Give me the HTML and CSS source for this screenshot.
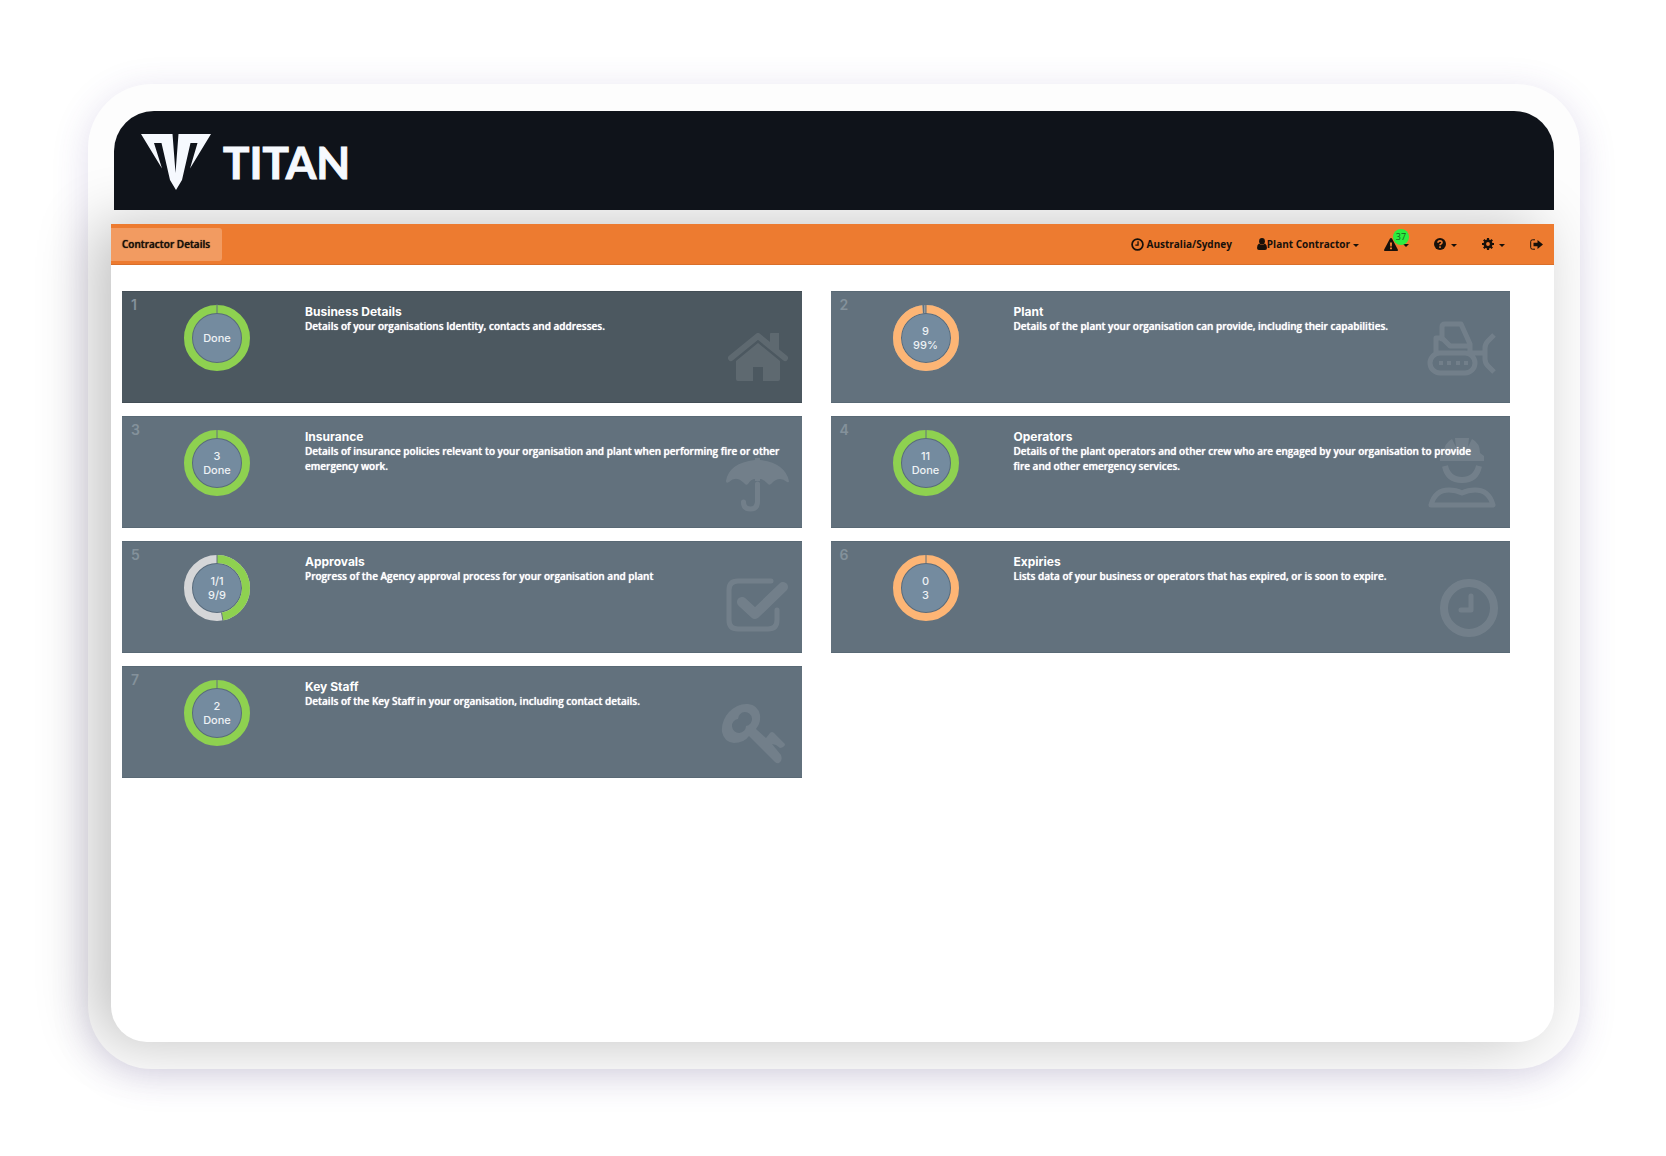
FILE: index.html
```
<!DOCTYPE html>
<html lang="en">

<head>
    <meta charset="UTF-8">
    <meta name="viewport" content="width=device-width, initial-scale=1.0">
    <title>Titan - Contractor Details</title>
    <link rel="stylesheet" href="styles.css">
</head>

<body>
    <div class="device">
        <header class="brand">
            <svg class="brand__mark" viewBox="0 0 70 56" width="70" height="56">
                <path fill="currentColor" fill-rule="evenodd" d="M0 0H31.500L34.500 39 37.500 0H70L49 34.500 56.500 9H49.500L41 46 35 56 29 46 20.500 9H13L21 34.500Z" />
            </svg>
            <span class="brand__name">TITAN</span>
        </header>

        <div class="screen">
            <nav class="navbar">
                <a href="#" class="navbar__tab">Contractor Details</a>
                <ul class="navbar__menu">
                    <li>
                        <button type="button" class="navbar__button">
                            <svg viewBox="0 0 12 12" width="13" height="13" fill="none" stroke="currentColor">
                                <circle cx="6" cy="6" r="5" stroke-width="1.600" />
                                <path d="M6.500 3V6.500H4" stroke-width="1.200" />
                            </svg>
                            <span class="navbar__label navbar__label--spaced">Australia/Sydney</span>
                        </button>
                    </li>
                    <li>
                        <button type="button" class="navbar__button">
                            <svg viewBox="0 0 10 12" width="10" height="12" fill="currentColor">
                                <ellipse cx="5" cy="3.200" rx="2.900" ry="3.200" />
                                <path d="M2 5.500Q5 8 8 5.500 10 6.500 10 10 10 12 8 12H2Q0 12 0 10 0 6.500 2 5.500Z" />
                            </svg>
                            <span class="navbar__label">Plant Contractor</span>
                            <span class="caret"></span>
                        </button>
                    </li>
                    <li>
                        <button type="button" class="navbar__button" aria-label="Alerts">
                            <svg viewBox="0 0 14 13" width="14" height="13" fill="currentColor">
                                <path fill-rule="evenodd" d="M7 0Q7.700 0 8 .6L13.800 11.500Q14.200 13 13 13H1Q-.2 13 .2 11.500L6 .6Q6.300 0 7 0ZM5.900 4.500 6.200 8.500H7.800L8.100 4.500ZM6 9.500V11.300H8V9.500Z" />
                            </svg>
                            <span class="caret caret--spaced"></span>
                            <span class="badge">37</span>
                        </button>
                    </li>
                    <li>
                        <button type="button" class="navbar__button" aria-label="Help">
                            <svg viewBox="0 0 12 12" width="12" height="12">
                                <circle cx="6" cy="6" r="6" fill="currentColor" />
                                <path class="navbar__cutout" d="M4 4.800Q4 2.900 6 2.900 8 2.900 8 4.600 8 5.600 6.900 6.100 6 6.500 6 7.300M6 8.300V10" />
                            </svg>
                            <span class="caret caret--spaced"></span>
                        </button>
                    </li>
                    <li>
                        <button type="button" class="navbar__button" aria-label="Settings">
                            <svg viewBox="0 0 12 12" width="12" height="12" fill="none" stroke="currentColor">
                                <circle cx="6" cy="6" r="3.200" stroke-width="2.600" />
                                <path stroke-width="2.200" d="M6 0V2.500M6 9.500V12M0 6H2.500M9.500 6H12M1.800 1.800 3.500 3.500M8.500 8.500 10.200 10.200M10.200 1.800 8.500 3.500M3.500 8.500 1.800 10.200" />
                            </svg>
                            <span class="caret caret--spaced"></span>
                        </button>
                    </li>
                    <li>
                        <button type="button" class="navbar__button" aria-label="Log out">
                            <svg viewBox="0 0 13 11" width="13" height="11">
                                <path fill="none" stroke="currentColor" d="M5 .8H2.500Q.7 .8 .7 2.600V8.400Q.7 10.200 2.500 10.200H5" />
                                <path fill="currentColor" d="M3.500 3.800H7.500V1L13 5.500 7.500 10V7.200H3.500Z" />
                            </svg>
                        </button>
                    </li>
                </ul>
            </nav>

            <main class="cards">
                <a href="#" class="card card--active">
                    <span class="card__number">1</span>
                    <div class="ring">
                        <svg class="ring__chart" viewBox="0 0 68 68">
                            <circle class="ring__disc" cx="34" cy="34" r="25" />
                            <circle class="ring__value ring__value--green" cx="34" cy="34" r="29" pathLength="100" stroke-dasharray="100" />
                            <path class="ring__tick" d="M34 0V9" />
                        </svg>
                        <div class="ring__text">Done</div>
                    </div>
                    <div class="card__body">
                        <h2>Business Details</h2>
                        <p>Details of your organisations Identity, contacts and addresses.</p>
                    </div>
                    <svg class="card__icon" viewBox="0 0 72 72">
                        <path class="line" stroke-width="6" d="M11 36 38 14 65 36" />
                        <path class="fill" d="M51 11H59V31L50 23V12Q50 11 51 11ZM38 21 60 39V57Q60 59 58 59H43V45H33V59H18Q16 59 16 57V39Z" />
                    </svg>
                </a>

                <a href="#" class="card">
                    <span class="card__number">2</span>
                    <div class="ring">
                        <svg class="ring__chart" viewBox="0 0 68 68">
                            <circle class="ring__disc" cx="34" cy="34" r="25" />
                            <circle class="ring__value ring__value--gap" cx="34" cy="34" r="29" />
                            <circle class="ring__value ring__value--orange" cx="34" cy="34" r="29" pathLength="100" stroke-dasharray="98 2" />
                            <path class="ring__tick" d="M34 0V9M31.500 0V9" />
                        </svg>
                        <div class="ring__text">9<br>99%</div>
                    </div>
                    <div class="card__body">
                        <h2>Plant</h2>
                        <p>Details of the plant your organisation can provide, including their capabilities.</p>
                    </div>
                    <svg class="card__icon" viewBox="0 0 72 72">
                        <path class="line" stroke-width="5" d="M14 17V5Q14 2 17 2H33L42 22V31M14 16H8V31M14 16 22 24H42M12 31H37A10 10 0 0 1 37 51H12A10 10 0 0 1 12 31ZM44 31H56" />
                        <path class="line line--flat" stroke-width="5" d="M66 13 60 19Q57 22 57 26V37Q57 41 60 44L66 50" />
                        <path class="line line--flat" stroke-width="4" d="M11 41H15M19 41H23M28 41H32M36 41H40" />
                    </svg>
                </a>

                <a href="#" class="card">
                    <span class="card__number">3</span>
                    <div class="ring">
                        <svg class="ring__chart" viewBox="0 0 68 68">
                            <circle class="ring__disc" cx="34" cy="34" r="25" />
                            <circle class="ring__value ring__value--green" cx="34" cy="34" r="29" pathLength="100" stroke-dasharray="100" />
                            <path class="ring__tick" d="M34 0V9" />
                        </svg>
                        <div class="ring__text">3<br>Done</div>
                    </div>
                    <div class="card__body">
                        <h2>Insurance</h2>
                        <p>Details of insurance policies relevant to your organisation and plant when performing fire or other emergency work.</p>
                    </div>
                    <svg class="card__icon" viewBox="0 0 72 72">
                        <path class="fill" d="M6 34Q9 16 35 13V11H40V13Q65 16 69 34 69 36 67 35 59 28 51 37 49 39 47 36 43 32 40 32V34H35V32Q31 32 28 37 26 39 24 36 16 28 9 35 6 37 6 34Z" />
                        <path class="line" stroke-width="5" d="M37.500 37V54Q37.500 62 30.500 62T23.500 55" />
                    </svg>
                </a>

                <a href="#" class="card">
                    <span class="card__number">4</span>
                    <div class="ring">
                        <svg class="ring__chart" viewBox="0 0 68 68">
                            <circle class="ring__disc" cx="34" cy="34" r="25" />
                            <circle class="ring__value ring__value--green" cx="34" cy="34" r="29" pathLength="100" stroke-dasharray="100" />
                            <path class="ring__tick" d="M34 0V9" />
                        </svg>
                        <div class="ring__text">11<br>Done</div>
                    </div>
                    <div class="card__body">
                        <h2>Operators</h2>
                        <p>Details of the plant operators and other crew who are engaged by your organisation to provide fire and other emergency services.</p>
                    </div>
                    <svg class="card__icon" viewBox="0 0 72 72">
                        <path class="fill" d="M12 14V9L16 6Q16-4 24-8L28 0 27-9H41L40 0 44-8Q52-4 52 6L56 9V14Z" />
                        <path class="line line--flat" stroke-width="6" d="M17 19Q20 33 34 33T51 19" />
                        <path class="line" stroke-width="5" d="M3 58Q7 43 21 43 28 43 34 46 40 43 47 43 61 43 65 58Z" />
                    </svg>
                </a>

                <a href="#" class="card">
                    <span class="card__number">5</span>
                    <div class="ring">
                        <svg class="ring__chart" viewBox="0 0 68 68">
                            <circle class="ring__disc" cx="34" cy="34" r="25" />
                            <circle class="ring__value ring__value--rest" cx="34" cy="34" r="29" />
                            <circle class="ring__value ring__value--green" cx="34" cy="34" r="29" pathLength="100" stroke-dasharray="47 53" />
                            <path class="ring__tick" d="M34 0V9M38.500 58.500 40 67" />
                        </svg>
                        <div class="ring__text">1/1<br>9/9</div>
                    </div>
                    <div class="card__body">
                        <h2>Approvals</h2>
                        <p>Progress of the Agency approval process for your organisation and plant</p>
                    </div>
                    <svg class="card__icon" viewBox="0 0 72 72">
                        <path class="line" stroke-width="5" d="M51 9H18Q9 9 9 18V48Q9 57 18 57H48Q57 57 57 48V38" />
                        <path class="line" stroke-width="10" d="M22 30 35 42 63 15" />
                    </svg>
                </a>

                <a href="#" class="card">
                    <span class="card__number">6</span>
                    <div class="ring">
                        <svg class="ring__chart" viewBox="0 0 68 68">
                            <circle class="ring__disc" cx="34" cy="34" r="25" />
                            <circle class="ring__value ring__value--orange" cx="34" cy="34" r="29" pathLength="100" stroke-dasharray="100" />
                            <path class="ring__tick" d="M34 0V9" />
                        </svg>
                        <div class="ring__text">0<br>3</div>
                    </div>
                    <div class="card__body">
                        <h2>Expiries</h2>
                        <p>Lists data of your business or operators that has expired, or is soon to expire.</p>
                    </div>
                    <svg class="card__icon" viewBox="0 0 72 72">
                        <circle class="line" stroke-width="8" cx="41" cy="36" r="25" />
                        <path class="line" stroke-width="5" d="M43 24V38H33" />
                    </svg>
                </a>

                <a href="#" class="card">
                    <span class="card__number">7</span>
                    <div class="ring">
                        <svg class="ring__chart" viewBox="0 0 68 68">
                            <circle class="ring__disc" cx="34" cy="34" r="25" />
                            <circle class="ring__value ring__value--green" cx="34" cy="34" r="29" pathLength="100" stroke-dasharray="100" />
                            <path class="ring__tick" d="M34 0V9" />
                        </svg>
                        <div class="ring__text">2<br>Done</div>
                    </div>
                    <div class="card__body">
                        <h2>Key Staff</h2>
                        <p>Details of the Key Staff in your organisation, including contact details.</p>
                    </div>
                    <svg class="card__icon" viewBox="0 0 72 72">
                        <path class="fill" fill-rule="evenodd" d="M9 15Q18 6 28 7 38 8 40 18 41 26 36 32L46 41 50 36Q52 34 54 36L65 47Q65 50 60 51L56 48 52 47 61 58Q63 64 59 66 57 67 55 65L29 39Q24 46 14 46 4 45 2 35 1 24 9 15ZM18 22A7 7 0 1 1 26 29 7 7 0 1 1 18 22Z" />
                    </svg>
                </a>
            </main>
        </div>
    </div>
</body>

</html>
```
FILE: styles.css
```
:root {
    --brand-bg: #0f131a;
    --nav-bg: #ed7b30;
    --nav-tab-bg: #f29b61;
    --card-bg: #62717d;
    --card-active-bg: #4c5860;
    --disc-bg: #748b9f;
    --green: #8ed150;
    --orange: #fdb575;
    --rest: #d5d6d8;
    --badge-bg: #2bee3f;
    --white: #fff;
}

* {
    box-sizing: border-box;
}

body {
    margin: 0;
    padding: 84px 86px 87px 88px;
    min-height: 100vh;
    display: flex;
    background: var(--white);
    font-family: 'Open Sans', 'Noto Sans', sans-serif;
}

.device {
    flex: 1;
    display: flex;
    flex-direction: column;
    padding: 27px 26px 27px 23px;
    border-radius: 64px;
    background: #fdfdfd;
    box-shadow: 0 8px 36px rgba(84, 60, 150, 0.18);
}

.brand {
    position: relative;
    display: flex;
    align-items: center;
    gap: 12px;
    height: 99px;
    margin-left: 3px;
    padding: 2px 0 0 27px;
    border-radius: 40px 40px 0 0;
    background: var(--brand-bg);
    color: #f6f9fe;
}

.brand__name {
    font-family: Lato, sans-serif;
    font-size: 44px;
    font-weight: 700;
    line-height: 56px;
    -webkit-text-stroke: 1px currentColor;
}

.screen {
    flex: 1;
    margin-top: 14px;
    border-radius: 0 0 36px 36px;
    background: var(--white);
    box-shadow: -16px 0 60px rgba(0, 0, 0, 0.24);
}

.navbar {
    display: flex;
    align-items: center;
    justify-content: space-between;
    height: 41px;
    padding-right: 11px;
    background: var(--nav-bg);
    border-bottom: 1px solid #d96f2a;
    color: #17100a;
}

.navbar__tab {
    padding: 0 12px 0 11px;
    border-radius: 0 3px 3px 0;
    background: var(--nav-tab-bg);
    color: inherit;
    font-size: 10px;
    font-weight: 600;
    line-height: 33px;
    text-decoration: none;
    text-shadow: 0 0 1px currentColor;
}

.navbar__menu {
    display: flex;
    gap: 25px;
    margin: 0;
    padding: 0;
    list-style: none;
}

.navbar__button {
    position: relative;
    display: flex;
    align-items: center;
    padding: 0;
    border: none;
    background: none;
    color: inherit;
    font-family: inherit;
    font-size: 10px;
    font-weight: 700;
    line-height: 16px;
    height: 16px;
    cursor: pointer;
}

.navbar__label--spaced {
    margin-left: 3px;
}

.navbar__cutout {
    fill: none;
    stroke: var(--nav-bg);
    stroke-width: 1.6;
}

.caret {
    margin: 3px 0 0 3px;
    border: 3px solid transparent;
    border-top-color: currentColor;
    border-bottom: none;
}

.caret--spaced {
    margin-left: 5px;
}

.badge {
    position: absolute;
    top: -7px;
    left: 9px;
    width: 16px;
    height: 16px;
    border-radius: 50%;
    background: var(--badge-bg);
    color: #175c1d;
    font-size: 9px;
    font-weight: 400;
    line-height: 15px;
    text-align: center;
}

.cards {
    display: grid;
    grid-template-columns: 1fr 1fr;
    gap: 13px 29px;
    padding: 26px 44px 26px 11px;
}

.card {
    position: relative;
    display: grid;
    grid-template-columns: 52px 122px 1fr;
    height: 112px;
    padding: 0 16px 0 9px;
    background: var(--card-bg);
    border: 1px solid #596975;
    border-width: 1px 0;
    color: var(--white);
    text-decoration: none;
}

.card--active {
    background: var(--card-active-bg);
    border-color: #434e56;
}

.card__number {
    padding-top: 3px;
    color: #84919b;
    font-family: Inter, sans-serif;
    font-size: 14px;
    font-weight: 600;
    line-height: 20px;
}

.card__body {
    padding-top: 13px;
}

.card__body h2 {
    margin: 0;
    font-family: Inter, sans-serif;
    font-size: 12px;
    font-weight: 700;
    line-height: 14px;
}

.card__body p {
    margin: 0;
    max-width: 476px;
    font-size: 10px;
    font-weight: 600;
    line-height: 15px;
    text-shadow: 0 0 1px currentColor;
}

.card__icon {
    position: absolute;
    right: 10px;
    bottom: 8px;
    width: 72px;
    height: 72px;
    overflow: visible;
    opacity: 0.1;
    pointer-events: none;
}

.card__icon .fill {
    fill: var(--white);
}

.card__icon .line {
    fill: none;
    stroke: var(--white);
    stroke-linecap: round;
    stroke-linejoin: round;
}

.card__icon .line--flat {
    stroke-linecap: butt;
}

.ring {
    display: grid;
    width: 68px;
    height: 68px;
    margin-top: 12px;
    place-items: center;
}

.ring__chart,
.ring__text {
    grid-area: 1 / 1;
}

.ring__chart {
    width: 68px;
    height: 68px;
}

.ring__disc {
    fill: var(--disc-bg);
    stroke: #586b7c;
    stroke-width: 2;
}

.ring__value {
    fill: none;
    stroke-width: 8;
    transform: rotate(-90deg);
    transform-origin: center;
}

.ring__value--green {
    stroke: var(--green);
}

.ring__value--orange {
    stroke: var(--orange);
}

.ring__value--rest {
    stroke: var(--rest);
}

.ring__value--gap {
    stroke: #94999c;
}

.ring__tick {
    fill: none;
    stroke: var(--card-bg);
    stroke-width: 1;
}

.ring__text {
    position: relative;
    color: #eef2f5;
    font-family: Inter, sans-serif;
    font-size: 11px;
    font-weight: 500;
    line-height: 14px;
    text-align: center;
}
```
